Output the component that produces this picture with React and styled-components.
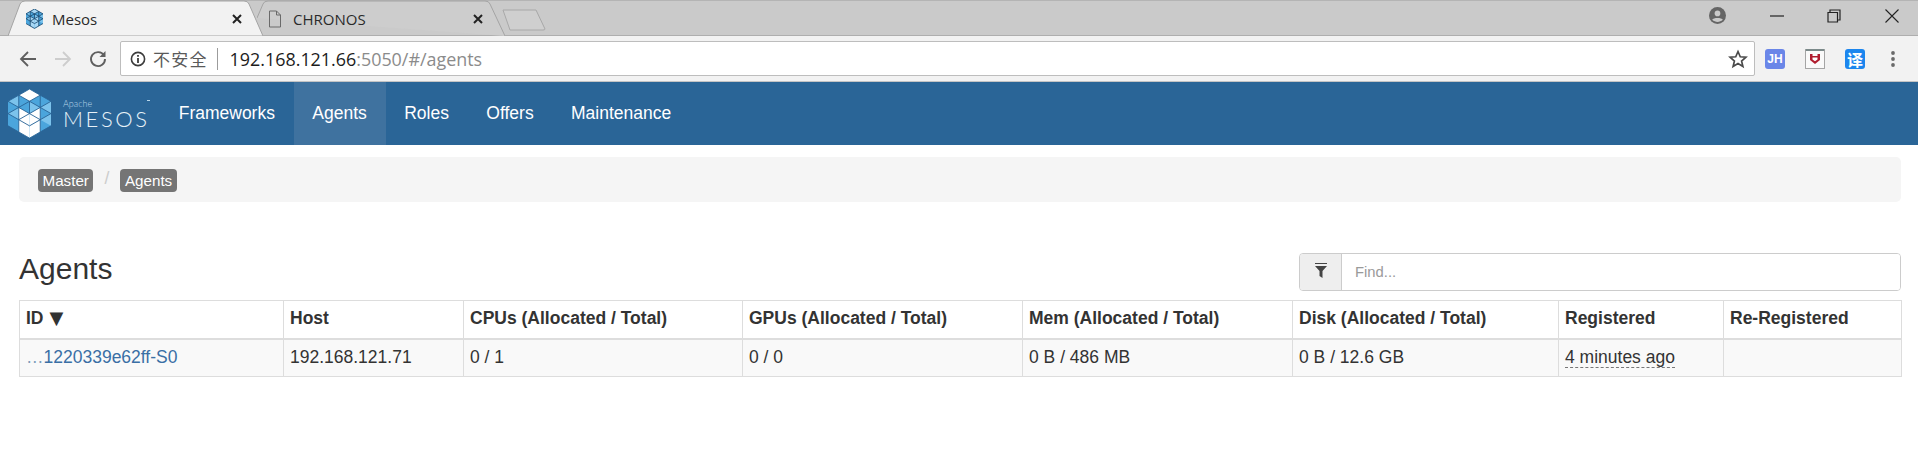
import React from 'react';
import styled, { createGlobalStyle } from 'styled-components';

const GlobalStyle = createGlobalStyle`
  html, body {
    margin: 0;
    padding: 0;
    height: 468px;
    overflow: hidden;
    background: #fff;
    font-family: 'Liberation Sans', Arial, sans-serif;
    color: #333;
  }
  * { box-sizing: border-box; }
`;

// browser chrome
const TabStrip = styled.div`
  height: 35px;
  background: #cacaca;
  border-top: 1px solid #b4b4b4;
  display: flex;
  align-items: stretch;
  padding-left: 8px;
  position: relative;
`;

const Tab = styled.div`
  position: relative;
  width: ${(p) => p.$width}px;
  margin-left: ${(p) => p.$overlap || 0}px;
  display: flex;
  align-items: center;
  padding: 2px ${(p) => p.$end}px 0 ${(p) => p.$inset}px;
  font-family: 'Open Sans', 'Noto Sans', sans-serif;
  font-size: 15px;
  color: #2a2a2a;
  svg { flex: none; }
`;

const TabShape = styled.svg`
  position: absolute;
  left: 0;
  top: -1px;
  width: 100%;
  height: 36px;
  z-index: 0;
`;

const TabIcon = styled.span`
  position: relative;
  display: flex;
`;

const TabLabel = styled.span`
  position: relative;
  flex: 1;
  margin-left: ${(p) => p.$gap}px;
`;

const TabClose = styled.svg`
  position: relative;
  width: 10px;
  height: 10px;
`;

const NewTab = styled.svg`
  width: 44px;
  height: 22px;
  margin: 8px 0 0 -3px;
`;

const WindowControls = styled.div`
  position: absolute;
  right: 19px;
  top: 0;
  height: 29px;
  display: flex;
  align-items: center;
`;

const WinIcon = styled.svg`
  display: block;
  margin-left: ${(p) => p.$gap}px;
`;

const Toolbar = styled.div`
  height: 47px;
  background: #f2f2f2;
  border-top: 1px solid #aeaeae;
  border-bottom: 1px solid #c4c4c4;
  display: flex;
  align-items: center;
  padding-left: 19px;
`;

const NavIcon = styled.svg`
  flex: none;
  width: 18px;
  height: 18px;
  margin-right: ${(p) => p.$gap}px;
`;

const AddressBar = styled.div`
  width: 1635px;
  height: 35px;
  background: #fff;
  border: 1px solid #bdbdbd;
  border-radius: 2px;
  display: flex;
  align-items: center;
  padding-left: 9px;
  font-family: 'Open Sans', 'Noto Sans CJK SC', sans-serif;
`;

const Insecure = styled.span`
  font-family: 'Noto Sans CJK SC', sans-serif;
  font-size: 17px;
  color: #5a5a5a;
  margin-left: 7px;
  letter-spacing: 1.2px;
`;

const Divider = styled.span`
  width: 1px;
  height: 22px;
  background: #9c9c9c;
  margin: 0 12px 0 9px;
`;

const Url = styled.span`
  flex: 1;
  font-size: 17.9px;
  color: #8b8b8b;
  b {
    font-weight: 400;
    color: #1c1c1c;
  }
`;

const StarIcon = styled.svg`
  width: 20px;
  height: 20px;
  margin-right: 6px;
`;

const ExtIcons = styled.div`
  display: flex;
  align-items: center;
  margin-left: 10px;
`;

const ExtBadge = styled.span`
  width: 20px;
  height: 20px;
  margin-right: 20px;
  border-radius: 3px;
  background: ${(p) => p.$bg};
  color: #fff;
  font-family: ${(p) => (p.$cjk ? "'Noto Sans CJK SC'" : "'Liberation Sans'")}, sans-serif;
  font-size: ${(p) => (p.$cjk ? 16 : 12)}px;
  font-weight: 700;
  display: flex;
  align-items: center;
  justify-content: center;
  line-height: 1;
`;

const ShieldBadge = styled(ExtBadge)`
  background: #fafafa;
  border: 1px solid #a5a5a5;
  border-top: 2px solid #7c8a8a;
  border-radius: 1px;
`;

const Dots = styled.svg`
  width: 6px;
  height: 18px;
  margin-left: 5px;
`;

// mesos page
const Navbar = styled.nav`
  height: 63px;
  background: #2a6597;
  display: flex;
  align-items: stretch;
`;

const Brand = styled.div`
  width: 160px;
  display: flex;
  align-items: center;
  padding: 0 0 0 8px;
`;

const BrandText = styled.div`
  position: relative;
  margin-left: 12px;
  color: #e6f1f8;
  font-family: Lato, 'Open Sans', sans-serif;
  font-weight: 300;
  span {
    display: block;
    font-size: 9px;
    line-height: 9px;
    color: #b8d6ea;
  }
  strong {
    display: block;
    font-weight: 300;
    font-size: 22px;
    line-height: 21px;
    letter-spacing: 2.6px;
  }
  i {
    position: absolute;
    right: 0;
    top: 1px;
    width: 3px;
    height: 1px;
    background: #b8d6ea;
  }
`;

const NavItem = styled.a`
  display: flex;
  align-items: center;
  padding: 0 18.7px;
  font-size: 17.5px;
  color: #fff;
  background: ${(p) => (p.$active ? '#3f729f' : 'transparent')};
`;

const Main = styled.main`
  padding: 12px 17px 0 19px;
`;

const Breadcrumb = styled.div`
  height: 45px;
  background: #f5f5f5;
  border-radius: 5px;
  display: flex;
  align-items: center;
  padding: 2px 19px 0;
`;

const Crumb = styled.span`
  height: 23px;
  padding: 0 4.5px;
  background: #757575;
  border-radius: 4px;
  color: #fff;
  font-size: 15.2px;
  line-height: 23px;
`;

const CrumbSep = styled.span`
  width: 27px;
  text-align: center;
  color: #ccc;
  font-size: 17.5px;
  margin-top: -4px;
`;

const HeadRow = styled.div`
  display: flex;
  justify-content: space-between;
  align-items: center;
  margin-top: 50px;
`;

const Title = styled.h3`
  margin: 0 0 5px;
  font-size: 30px;
  font-weight: 400;
  color: #333;
`;

const FilterGroup = styled.div`
  width: 602px;
  height: 38px;
  display: flex;
  border: 1px solid #ccc;
  border-radius: 4px;
  overflow: hidden;
`;

const FilterAddon = styled.span`
  width: 42px;
  background: #eee;
  border-right: 1px solid #ccc;
  display: flex;
  align-items: center;
  justify-content: center;
  padding-bottom: 3px;
`;

const FilterInput = styled.input`
  flex: 1;
  border: 0;
  outline: 0;
  padding: 0 13px;
  font: 14.8px 'Liberation Sans', sans-serif;
  &::placeholder { color: #9a9a9a; opacity: 1; }
`;

const Table = styled.table`
  width: 1882px;
  margin-top: 9px;
  border-collapse: collapse;
  table-layout: fixed;
  font-size: 17.5px;
`;

const Th = styled.th`
  width: ${(p) => p.$width}px;
  height: 38px;
  padding: 0 6px 2px;
  text-align: left;
  font-weight: 700;
  color: #333;
  border: 1px solid #ddd;
  border-bottom-width: 2px;
  white-space: nowrap;
`;

const SortArrow = styled.span`
  margin-left: 6px;
  font-family: 'DejaVu Sans', sans-serif;
  font-size: 18px;
  font-weight: 400;
`;

const Td = styled.td`
  height: 38px;
  padding: 0 6px;
  border: 1px solid #ddd;
  background: #f9f9f9;
  white-space: nowrap;
`;

const IdLink = styled.a`
  color: #3a6fa5;
  span { color: #7d9dba; }
`;

const Dashed = styled.span`
  border-bottom: 1px dashed #777;
`;

const HEX = '21,0 42,12 42,36 21,48 0,36 0,12';

const MesosLogo = ({ size = 43, lines = '#2a6597', white = '#fff', weight = 0.9 }) => (
  <svg width={size} height={(size * 48) / 42} viewBox="0 0 42 48">
    <polygon points={HEX} fill="#4ba5dc" />
    <polygon points="0,12 10.5,6 10.5,18" fill="#7cc3ec" />
    <polygon points="21,12 31.5,18 21,24" fill="#7cc3ec" />
    <polygon points="31.5,18 42,12 42,24" fill="#7cc3ec" />
    <polygon points="0,24 10.5,18 10.5,30" fill="#7cc3ec" />
    <polygon points="31.5,30 42,24 42,36" fill="#7cc3ec" />
    <polygon points="10.5,6 21,0 31.5,6 21,12" fill={white} />
    <polygon points="10.5,18 21,24 21,48 10.5,42" fill={white} />
    <polygon points="21,24 31.5,18 31.5,30 21,36" fill={white} />
    <polygon points="21,36 31.5,30 31.5,42 21,48" fill={white} />
    <g stroke={lines} strokeWidth={weight} fill="none">
      <path d="M0 12L31.5 30M0 24L21 36M0 36L21 48M10.5 6L42 24M21 0L42 12" />
      <path d="M42 12L10.5 30M42 24L21 36M42 36L21 48M31.5 6L0 24M21 0L0 12" />
      <path d="M10.5 6V42M21 12V24M31.5 6V42" />
    </g>
  </svg>
);

const CloseGlyph = () => (
  <TabClose viewBox="0 0 10 10">
    <path d="M1 1L9 9M9 1L1 9" stroke="#222" strokeWidth="2" />
  </TabClose>
);

const columns = [
  ['ID', 264],
  ['Host', 180],
  ['CPUs (Allocated / Total)', 279],
  ['GPUs (Allocated / Total)', 280],
  ['Mem (Allocated / Total)', 270],
  ['Disk (Allocated / Total)', 266],
  ['Registered', 165],
  ['Re-Registered', 178],
];

export default function App() {
  return (
    <>
      <GlobalStyle />
      <TabStrip>
        <Tab $width={255} $inset={18} $end={21}>
          <TabShape viewBox="0 0 255 36" preserveAspectRatio="none">
            <path d="M0 36L12 4Q13 1 17 1H236Q240 1 241 4L255 36Z" fill="#f2f2f2" stroke="#a4a4a4" />
          </TabShape>
          <TabIcon>
            <MesosLogo size={17} lines="#1c4a70" white="#a8d8f5" weight={2} />
          </TabIcon>
          <TabLabel $gap={9}>Mesos</TabLabel>
          <CloseGlyph />
        </Tab>
        <Tab $width={248} $overlap={-6} $inset={11} $end={22}>
          <TabShape viewBox="0 0 248 36" preserveAspectRatio="none">
            <path d="M0 18L6 4Q7 1 11 1H228Q232 1 233 4L248 36" fill="#cdcdcd" stroke="#a4a4a4" />
          </TabShape>
          <TabIcon>
            <svg width="14" height="18" viewBox="0 0 14 18">
              <path d="M1.5 1H8.5L12.5 5V17H1.5ZM8.5 1V5H12.5" fill="none" stroke="#6a6a6a" />
            </svg>
          </TabIcon>
          <TabLabel $gap={11}>CHRONOS</TabLabel>
          <CloseGlyph />
        </Tab>
        <NewTab viewBox="0 0 44 22">
          <path d="M1 1H34L43 20Q43 21 41 21H8Z" fill="#cfcfcf" stroke="#a8a8a8" />
        </NewTab>
        <WindowControls>
          <WinIcon width="17" height="17" viewBox="0 0 24 24">
            <circle cx="12" cy="12" r="12" fill="#656565" />
            <circle cx="12" cy="9" r="4" fill="#cacaca" />
            <path d="M4.5 18C6 14.5 18 14.5 19.5 18C15 22 9 22 4.5 18Z" fill="#cacaca" />
          </WinIcon>
          <WinIcon $gap={44} width="14" height="2" viewBox="0 0 14 2">
            <path d="M0 1H14" stroke="#222" strokeWidth="1.2" />
          </WinIcon>
          <WinIcon $gap={43} width="14" height="14" viewBox="0 0 14 14">
            <path d="M3 3V1H13V11H11M1 3.5H10.5V13H1Z" fill="none" stroke="#222" strokeWidth="1.2" />
          </WinIcon>
          <WinIcon $gap={44} width="14" height="14" viewBox="0 0 14 14">
            <path d="M0.5 0.5L13.5 13.5M13.5 0.5L0.5 13.5" stroke="#222" strokeWidth="1.1" />
          </WinIcon>
        </WindowControls>
      </TabStrip>

      <Toolbar>
        <NavIcon $gap={17} viewBox="0 0 18 18">
          <path d="M17 9H2M9 2L2 9L9 16" fill="none" stroke="#5f5f5f" strokeWidth="1.8" />
        </NavIcon>
        <NavIcon $gap={17} viewBox="0 0 18 18">
          <path d="M1 9H16M9 2L16 9L9 16" fill="none" stroke="#cdcdcd" strokeWidth="1.8" />
        </NavIcon>
        <NavIcon $gap={13} viewBox="0 0 18 18">
          <path d="M15 5.5A7 7 0 1 0 16 9" fill="none" stroke="#5f5f5f" strokeWidth="1.9" />
          <path d="M16.5 1V7H10.5Z" fill="#5f5f5f" />
        </NavIcon>
        <AddressBar>
          <svg width="16" height="16" viewBox="0 0 16 16">
            <circle cx="8" cy="8" r="6.6" fill="none" stroke="#3c3c3c" strokeWidth="1.6" />
            <path d="M8 7V12M8 4V5.8" stroke="#3c3c3c" strokeWidth="1.8" />
          </svg>
          <Insecure>不安全</Insecure>
          <Divider />
          <Url>
            <b>192.168.121.66</b>:5050/#/agents
          </Url>
          <StarIcon viewBox="0 0 24 24">
            <path d="M12 3L14.7 9.3L21.5 9.9L16.3 14.4L17.9 21L12 17.5L6.1 21L7.7 14.4L2.5 9.9L9.3 9.3Z" fill="none" stroke="#4a4a4a" strokeWidth="2" />
          </StarIcon>
        </AddressBar>
        <ExtIcons>
          <ExtBadge $bg="#6a86e8">JH</ExtBadge>
          <ShieldBadge>
            <svg width="12" height="12" viewBox="0 0 12 12">
              <path d="M1 1H3.5V3H8.5V1H11V7L6 11L1 7Z" fill="#b01c2e" />
              <path d="M3.5 4.5H8.5V6.5L6 8.3L3.5 6.5Z" fill="#fff" />
            </svg>
          </ShieldBadge>
          <ExtBadge $bg="#1c86ee" $cjk>译</ExtBadge>
          <Dots viewBox="0 0 6 18">
            <circle cx="3" cy="3" r="1.9" fill="#6a6a6a" />
            <circle cx="3" cy="9" r="1.9" fill="#6a6a6a" />
            <circle cx="3" cy="15" r="1.9" fill="#6a6a6a" />
          </Dots>
        </ExtIcons>
      </Toolbar>

      <Navbar>
        <Brand>
          <MesosLogo />
          <BrandText>
            <span>Apache</span>
            <strong>MESOS</strong>
            <i />
          </BrandText>
        </Brand>
        <NavItem>Frameworks</NavItem>
        <NavItem $active>Agents</NavItem>
        <NavItem>Roles</NavItem>
        <NavItem>Offers</NavItem>
        <NavItem>Maintenance</NavItem>
      </Navbar>

      <Main>
        <Breadcrumb>
          <Crumb>Master</Crumb>
          <CrumbSep>/</CrumbSep>
          <Crumb>Agents</Crumb>
        </Breadcrumb>

        <HeadRow>
          <Title>Agents</Title>
          <FilterGroup>
            <FilterAddon>
              <svg width="14" height="15" viewBox="0 0 14 15">
                <path d="M1 0.5H13" stroke="#444" />
                <path d="M1 3H13L8.5 8V15L5.5 13V8Z" fill="#444" />
              </svg>
            </FilterAddon>
            <FilterInput placeholder="Find..." />
          </FilterGroup>
        </HeadRow>

        <Table>
          <thead>
            <tr>
              {columns.map(([label, width]) => (
                <Th key={label} $width={width}>
                  {label}
                  {label === 'ID' && <SortArrow>▼</SortArrow>}
                </Th>
              ))}
            </tr>
          </thead>
          <tbody>
            <tr>
              <Td>
                <IdLink><span>…</span>1220339e62ff-S0</IdLink>
              </Td>
              <Td>192.168.121.71</Td>
              <Td>0 / 1</Td>
              <Td>0 / 0</Td>
              <Td>0 B / 486 MB</Td>
              <Td>0 B / 12.6 GB</Td>
              <Td><Dashed>4 minutes ago</Dashed></Td>
              <Td />
            </tr>
          </tbody>
        </Table>
      </Main>
    </>
  );
}
